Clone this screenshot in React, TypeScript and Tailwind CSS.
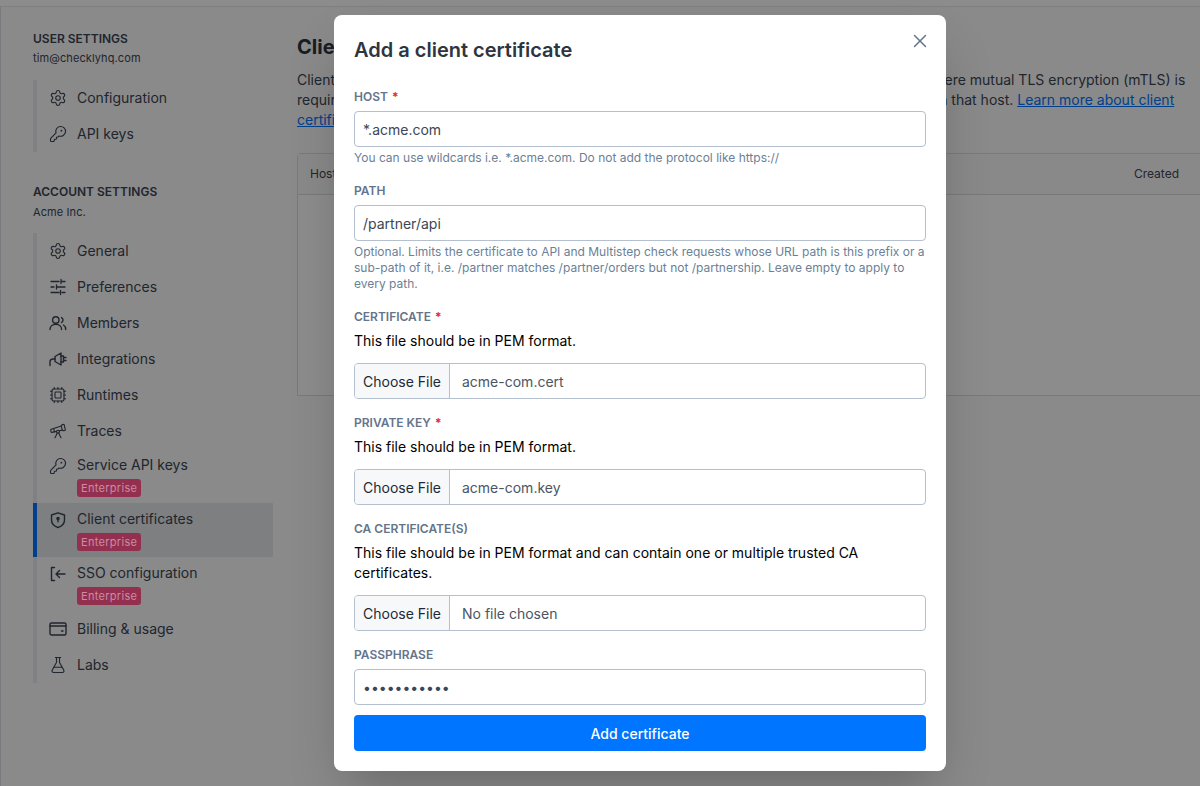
import React from "react";
import { Settings, KeyRound, Cpu, Telescope, FlaskConical, X } from "lucide-react";

const iconClass = "w-[18px] h-[18px] shrink-0";

const PrefsIcon = () => (
  <svg viewBox="0 0 18 18" fill="none" stroke="currentColor" strokeWidth="1.3" strokeLinecap="round" strokeLinejoin="round" className={iconClass}>
    <path d="M2 3.500h8M13 3.500h3M12 1.500v4" />
    <path d="M2 9h3M8 9h8M7.500 7v4" />
    <path d="M2 14.500h8M13 14.500h3M11.500 12.500v4" />
  </svg>
);

const MembersIcon = () => (
  <svg viewBox="0 0 18 18" fill="none" stroke="currentColor" strokeWidth="1.4" strokeLinecap="round" strokeLinejoin="round" className={iconClass}>
    <circle cx="6.800" cy="6" r="3.200" />
    <path d="M1 15.500c0-3 2.500-5.200 5.800-5.200s5.800 2.200 5.800 5.200" />
    <path d="M12.500 3.500a2.800 2.800 0 0 1 0 5M14.500 11c1.300.8 2.200 2.500 2.200 4.500" />
  </svg>
);

const PlugIcon = () => (
  <svg viewBox="0 0 18 18" fill="none" stroke="currentColor" strokeWidth="1.4" strokeLinecap="round" strokeLinejoin="round" className={iconClass}>
    <path d="M1 15.500v-3.500a3 3 0 0 1 3-3h2" />
    <path d="M6 6.500 12 3v12l-6-3.500z" />
    <path d="M12 6h2.500v6H12M14.500 7.500H17M14.500 10.500H17" />
  </svg>
);

const ShieldIcon = () => (
  <svg viewBox="0 0 18 18" fill="none" stroke="currentColor" strokeWidth="1.4" strokeLinecap="round" strokeLinejoin="round" className={iconClass}>
    <path d="M9 1.800 15.500 4v5c0 3.600-2.600 6.200-6.500 7.500C5.100 15.200 2.500 12.600 2.500 9V4L9 1.800Z" />
    <circle cx="9" cy="7.500" r="1.100" fill="currentColor" />
    <path d="M9 8.200v2.600" />
  </svg>
);

const SsoIcon = () => (
  <svg viewBox="0 0 18 18" fill="none" stroke="currentColor" strokeWidth="1.4" strokeLinecap="round" strokeLinejoin="round" className={iconClass}>
    <path d="M5.500 2.500H2.500v13h3" />
    <path d="M16 9H7M10.500 5.500 7 9l3.500 3.500" />
  </svg>
);

const WalletIcon = () => (
  <svg viewBox="0 0 18 18" fill="none" stroke="currentColor" strokeWidth="1.4" strokeLinecap="round" strokeLinejoin="round" className={iconClass}>
    <rect x="1" y="3" width="16" height="12" rx="1.500" />
    <path d="M1 6h16M12.500 11h1.500" />
  </svg>
);

const accountItems = [
  { label: "General", icon: <Settings className={iconClass} strokeWidth={1.5} /> },
  { label: "Preferences", icon: <PrefsIcon /> },
  { label: "Members", icon: <MembersIcon /> },
  { label: "Integrations", icon: <PlugIcon /> },
  { label: "Runtimes", icon: <Cpu className={iconClass} strokeWidth={1.5} /> },
  { label: "Traces", icon: <Telescope className={iconClass} strokeWidth={1.5} /> },
  { label: "Service API keys", icon: <KeyRound className={iconClass} strokeWidth={1.5} />, badge: true },
  { label: "Client certificates", icon: <ShieldIcon />, badge: true, active: true },
  { label: "SSO configuration", icon: <SsoIcon />, badge: true },
  { label: "Billing & usage", icon: <WalletIcon /> },
  { label: "Labs", icon: <FlaskConical className={iconClass} strokeWidth={1.5} /> },
];

const NavItem = ({ label, icon, badge, active }: { label: string; icon: React.ReactNode; badge?: boolean; active?: boolean }) => (
  <div
    className={`flex gap-2.5 pl-3 pr-2 border-l-4 -ml-1 ${active ? "border-[#0075ff] bg-[#e4e7ec]" : "border-transparent"} ${badge ? "h-[54px] pt-1.5" : "h-9 items-center"}`}
  >
    <span className={badge ? "pt-0.5" : ""}>{icon}</span>
    <div className="flex flex-col items-start">
      <span className="text-sm leading-5">{label}</span>
      {badge && (
        <span className="relative z-10 mt-1 rounded-[3px] bg-[#93304f] px-1 text-[11px] leading-[18px] tracking-[0.3px] text-[#cf8aa4]">
          Enterprise
        </span>
      )}
    </div>
  </div>
);

const Label = ({ text, required }: { text: string; required?: boolean }) => (
  <div className="text-xs font-semibold uppercase leading-4 text-[#64748b]">
    {text}
    {required && <span className="ml-1 text-[#dc2626]">*</span>}
  </div>
);

const TextInput = ({ value, type = "text" }: { value: string; type?: string }) => (
  <input
    readOnly
    type={type}
    value={value}
    className="h-9 w-full rounded border border-[#b4c0d0] px-2 text-sm text-[#3c4654] outline-none"
  />
);

const FileInput = ({ name }: { name: string }) => (
  <div className="flex h-9 w-full overflow-hidden rounded border border-[#b4c0d0] text-sm">
    <div className="flex w-[95px] items-center justify-center border-r border-[#b4c0d0] bg-[#f6f8fa] pt-0.5 text-[#1f2937]">Choose File</div>
    <div className="flex items-center pl-3 pt-0.5 text-[#4b5563]">{name}</div>
  </div>
);

const Help = ({ children }: { children: React.ReactNode }) => (
  <p className="mt-[3px] text-xs leading-4 text-[#6b7f96]">{children}</p>
);

export default function App() {
  return (
    <div className="relative h-[786px] w-[1200px] overflow-hidden bg-[#fbfbfb] font-['Inter',sans-serif] text-[#3c4654] antialiased">
      <div className="h-[7px] border-b border-[#e5e7eb] bg-white" />
      <div className="flex h-[779px] border-l border-[#d9dde3]">
        <aside className="w-[272px] shrink-0 pl-8 pt-6">
          <h3 className="text-xs font-semibold uppercase leading-4">User settings</h3>
          <p className="mt-[3px] text-[11px] leading-4 tracking-[0.1px]">tim@checklyhq.com</p>
          <nav className="mt-[14px] w-60 border-l-4 border-[#e7ebf0]">
            <NavItem label="Configuration" icon={<Settings className={iconClass} strokeWidth={1.5} />} />
            <NavItem label="API keys" icon={<KeyRound className={iconClass} strokeWidth={1.5} />} />
          </nav>
          <h3 className="mt-8 text-xs font-semibold uppercase leading-4">Account settings</h3>
          <p className="mt-[4px] text-[11px] leading-4 tracking-[0.1px]">Acme Inc.</p>
          <nav className="mt-[13px] w-60 border-l-4 border-[#e7ebf0]">
            {accountItems.map((item) => (
              <NavItem key={item.label} {...item} />
            ))}
          </nav>
        </aside>
        <main className="min-w-0 flex-1 pl-6 pt-[26px]">
          <h1 className="text-xl font-bold leading-7 text-[#2d3542]">Client certificates</h1>
          <p className="mt-[9px] w-[903px] text-sm leading-5">
            Client certificates let Checkly authenticate itself against your API or server when you hit a host where mutual TLS encryption (mTLS) is
            <br />
            required. Upload a certificate and keys for every host and we will send them with every request on that host.{" "}
            <a className="text-[#0075ff] underline">Learn more about client</a>
            <br />
            <a className="text-[#0075ff] underline">certificates.</a>
          </p>
          <div className="mt-[23px] h-[243px] w-[1000px] rounded-tl border border-[#d9dde3] bg-white">
            <div className="flex h-[41px] items-center justify-between border-b border-[#d9dde3] bg-[#fafafa] pl-3 pr-[117px] text-xs">
              <span>Host</span>
              <span>Created</span>
            </div>
          </div>
        </main>
      </div>

      <div className="absolute inset-0 flex items-center justify-center bg-black/45 pl-20">
        <div className="relative z-20 h-[756px] w-[612px] rounded-lg bg-white px-5 pt-5 shadow-2xl">
          <X className="absolute right-[15px] top-[15px] h-[22px] w-[22px] text-[#64748b]" strokeWidth={1.6} />
          <h2 className="text-xl font-semibold leading-[30px] text-[#2d3542]">Add a client certificate</h2>
          <div className="mt-6">
            <Label text="Host" required />
            <div className="mt-[6px]"><TextInput value="*.acme.com" /></div>
            <Help>You can use wildcards i.e. *.acme.com. Do not add the protocol like https://</Help>
          </div>
          <div className="mt-[17px]">
            <Label text="Path" />
            <div className="mt-[6px]"><TextInput value="/partner/api" /></div>
            <Help>
              Optional. Limits the certificate to API and Multistep check requests whose URL path is this prefix or a sub-path of it, i.e. /partner matches /partner/orders but not /partnership. Leave empty to apply to every path.
            </Help>
          </div>
          <div className="mt-[17px]">
            <Label text="Certificate" required />
            <p className="mt-[6px] text-sm leading-5 text-black">This file should be in PEM format.</p>
            <div className="mt-3"><FileInput name="acme-com.cert" /></div>
          </div>
          <div className="mt-4">
            <Label text="Private key" required />
            <p className="mt-[6px] text-sm leading-5 text-black">This file should be in PEM format.</p>
            <div className="mt-3"><FileInput name="acme-com.key" /></div>
          </div>
          <div className="mt-4">
            <Label text="CA certificate(s)" />
            <p className="mt-[6px] text-sm leading-5 text-black">
              This file should be in PEM format and can contain one or multiple trusted CA certificates.
            </p>
            <div className="mt-3"><FileInput name="No file chosen" /></div>
          </div>
          <div className="mt-4">
            <Label text="Passphrase" />
            <div className="mt-[6px]"><TextInput type="password" value="supersecret" /></div>
          </div>
          <button className="mt-2.5 h-9 w-full rounded bg-[#0075ff] pt-0.5 text-sm font-medium text-white">Add certificate</button>
        </div>
      </div>
    </div>
  );
}
